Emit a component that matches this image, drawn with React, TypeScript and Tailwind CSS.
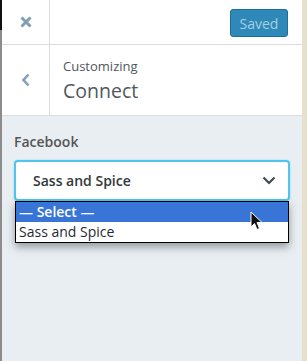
import React from "react";

export default function App() {
  const font = { fontFamily: '"Open Sans", "Noto Sans", sans-serif' };
  return (
    <div className="w-[307px] h-[361px] flex bg-[#e8dfcc] overflow-hidden" style={font}>
      <div className="w-[2px] flex flex-col">
        <div className="h-[30px] bg-[#111]" />
        <div className="flex-1 bg-[#8c8c8c]" />
      </div>
      <div className="w-[300px] flex flex-col bg-[#e9eef2]">
        {/* Header */}
        <div className="h-[45px] flex bg-white border-b border-[#dcdcde]">
          <div className="w-[48px] border-r border-[#dcdcde] flex items-center justify-center">
            <svg width="12" height="12" viewBox="0 0 12 12">
              <path d="M1.5 1.5 L10.5 10.5 M10.5 1.5 L1.5 10.5" stroke="#7f9fb6" strokeWidth="3" strokeLinecap="butt" />
            </svg>
          </div>
          <div className="flex-1 flex items-start justify-end pr-[14px] pt-[9px]">
            <div className="h-[28px] w-[58px] rounded-[3px] bg-[#2e89b8] border border-[#1d6e99] flex items-center justify-center text-[14px] text-[#a6cfe4]">
              Saved
            </div>
          </div>
        </div>
        {/* Title row */}
        <div className="h-[71px] flex bg-white border-b border-[#dcdcde]">
          <div className="w-[48px] border-r border-[#dcdcde] flex items-center justify-center">
            <svg width="10" height="14" viewBox="0 0 10 14">
              <path d="M7.5 1.5 L2.5 7 L7.5 12.5" fill="none" stroke="#7ea2bd" strokeWidth="2.6" />
            </svg>
          </div>
          <div className="flex-1 pl-[13px] pt-[12px] flex flex-col">
            <div className="text-[13px] leading-[18px] text-[#50575e]">Customizing</div>
            <div className="text-[19.5px] leading-[28px] text-[#50575e] mt-[2px]">Connect</div>
          </div>
        </div>
        {/* Content */}
        <div className="flex-1 px-[12px] pt-[16px]">
          <div className="text-[14px] leading-[20px] font-semibold text-[#555]">Facebook</div>
          <div className="relative mt-[8px]">
            <div className="h-[41px] w-[276px] rounded-[4px] border-2 border-[#4fc4ee] bg-white shadow-[0_0_2px_#8fd8f5] flex items-center pl-[17px] pr-[12px]">
              <span className="flex-1 text-[14px] font-semibold text-[#32373c]">Sass and Spice</span>
              <svg width="14" height="9" viewBox="0 0 14 9">
                <path d="M1.5 1.5 L7 7 L12.5 1.5" fill="none" stroke="#3c4a56" strokeWidth="2.2" />
              </svg>
            </div>
            <div className="absolute left-[1px] top-[41px] w-[274px] border border-black bg-white shadow-[0_4px_8px_rgba(60,70,80,0.5)]">
              <div className="h-[20px] bg-[#3875d7] text-white text-[14px] font-semibold leading-[20px] pl-[3px]">— Select —</div>
              <div className="h-[20px] text-[#1f2a33] text-[14px] font-medium leading-[20px] pl-[3px]">Sass and Spice</div>
            </div>
            <svg className="absolute left-[236px] top-[51px]" width="14" height="20" viewBox="0 0 14 20">
              <path d="M1 1 L1 16 L4.5 12.5 L7 18.5 L9.5 17.5 L7 11.5 L12 11.5 Z" fill="#111" stroke="#fff" strokeWidth="1" />
            </svg>
          </div>
        </div>
      </div>
    </div>
  );
}
